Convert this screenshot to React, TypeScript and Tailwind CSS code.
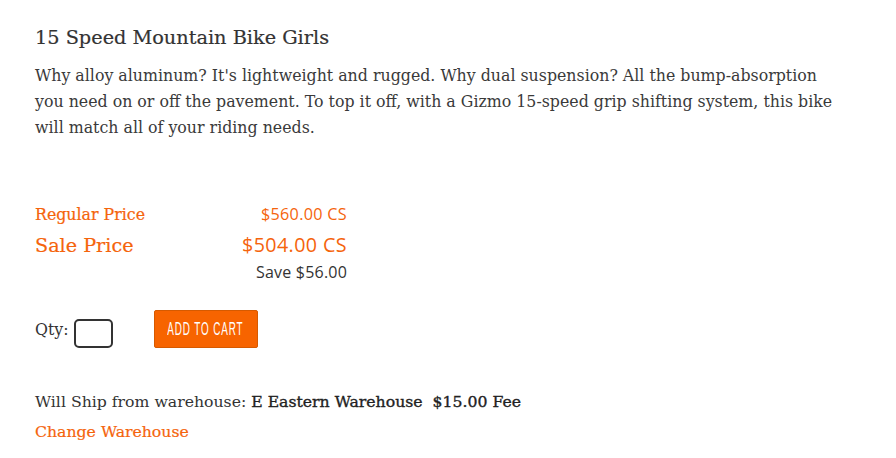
import React from "react";

export default function App() {
  const serif = { fontFamily: '"DejaVu Serif", serif' } as React.CSSProperties;
  const sans = { fontFamily: '"Open Sans", sans-serif' } as React.CSSProperties;
  return (
    <div className="w-[896px] h-[458px] bg-white text-[#333]" style={serif}>
      <div className="pl-[35px] pt-[26px]">
        <h1 className="text-[19.3px] leading-[24px] text-[#333] m-0 font-normal whitespace-nowrap [-webkit-text-stroke:0.2px_#333]">15 Speed Mountain Bike Girls</h1>
        <p className="mt-[13px] text-[15.8px] leading-[26px] text-[#3a3a3a] whitespace-nowrap">
          Why alloy aluminum? It's lightweight and rugged. Why dual suspension? All the bump-absorption
          <br />
          you need on or off the pavement. To top it off, with a Gizmo 15-speed grip shifting system, this bike
          <br />
          will match all of your riding needs.
        </p>
        <div className="mt-[61px] w-[312px] text-[#f5640c]">
          <div className="flex justify-between items-baseline h-[28px]">
            <span className="text-[15.8px] [-webkit-text-stroke:0.2px_#f5640c]">Regular Price</span>
            <span className="text-[16.2px] font-medium tracking-[0.3px]" style={sans}>$560.00 CS</span>
          </div>
          <div className="flex justify-between items-baseline h-[30px]">
            <span className="text-[19.2px] [-webkit-text-stroke:0.2px_#f5640c]">Sale Price</span>
            <span className="text-[19.7px] tracking-[0.4px]" style={sans}>$504.00 CS</span>
          </div>
          <div className="flex justify-end h-[28px]">
            <span className="text-[16px] text-[#333] tracking-[0.2px]" style={sans}>Save $56.00</span>
          </div>
        </div>
        <div className="mt-[22px] flex items-end h-[38px]">
          <span className="text-[15.8px] leading-[20px] mb-[8px]">Qty:</span>
          <input className="ml-[5px] w-[39px] h-[29px] border-2 border-[#333] rounded-[5px]" />
          <button
            className="ml-[41px] w-[104px] h-[38px] bg-[#f76400] border border-[#d65a00] rounded-[2px] text-white text-[18px] whitespace-nowrap flex items-center justify-center overflow-hidden"
            style={{ fontFamily: '"Liberation Sans", sans-serif' }}
          >
            <span className="inline-block scale-x-[0.55] tracking-[1.6px]">ADD TO CART</span>
          </button>
        </div>
        <div className="mt-[39px] text-[15.7px] leading-[30px] whitespace-nowrap">
          <div>
            Will Ship from warehouse: <span className="text-[#222] [-webkit-text-stroke:0.35px_#222]">E Eastern Warehouse&nbsp;&nbsp;$15.00 Fee</span>
          </div>
          <div className="text-[#f5640c] [-webkit-text-stroke:0.2px_#f5640c]">Change Warehouse</div>
        </div>
      </div>
    </div>
  );
}
